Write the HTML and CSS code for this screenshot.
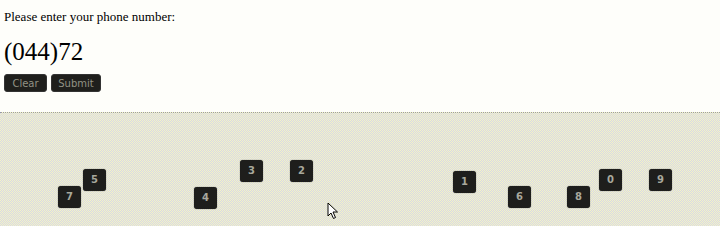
FILE: index.html
```html
<!DOCTYPE html>
<html lang="en">
<head>
    <meta charset="UTF-8">
    <title>Phone Number</title>
    <link rel="stylesheet" href="styles.css">
</head>
<body>
    <div class="entry">
        <p class="prompt">Please enter your phone number:</p>
        <div class="number">(044)72</div>
        <div class="actions">
            <button class="btn btn-clear">Clear</button>
            <button class="btn btn-submit">Submit</button>
        </div>
    </div>

    <div class="keypad">
        <span class="key" style="left:58px;top:73px">7</span>
        <span class="key" style="left:83px;top:56px">5</span>
        <span class="key" style="left:194px;top:74px">4</span>
        <span class="key" style="left:240px;top:47px">3</span>
        <span class="key" style="left:290px;top:47px">2</span>
        <span class="key" style="left:453px;top:58px">1</span>
        <span class="key" style="left:508px;top:73px">6</span>
        <span class="key" style="left:567px;top:73px">8</span>
        <span class="key" style="left:599px;top:56px">0</span>
        <span class="key" style="left:649px;top:56px">9</span>

        <!-- mouse pointer -->
        <svg class="pointer" width="12" height="18" viewBox="0 0 12 18">
            <path d="M1 1 L1 14 L4 11 L6.5 16.5 L8.5 15.5 L6 10 L10.5 10 Z" fill="#fff" stroke="#000" stroke-width="1"/>
        </svg>
    </div>
</body>
</html>
```

FILE: styles.css
```css
body {
    margin: 0;
    font-family: "Liberation Serif", serif;
    background-color: #fefefa;
    color: #000;
}
.entry {
    padding: 0 4px;
    height: 112px;
    box-sizing: border-box;
    overflow: hidden;
}
.prompt {
    margin: 0;
    padding-top: 9px;
    font-size: 13px;
    line-height: 16px;
}
.number {
    font-size: 25px;
    line-height: 30px;
    margin-top: 12px;
}
.actions {
    display: flex;
    gap: 4px;
    margin-top: 7px;
}
.btn {
    font-family: "DejaVu Sans", Verdana, sans-serif;
    font-size: 10px;
    color: #929284;
    background-color: #1f1f1c;
    border: 1px solid #333;
    border-radius: 3px;
    height: 18px;
    padding: 0;
    cursor: pointer;
}
.btn-clear {
    width: 43px;
}
.btn-submit {
    width: 50px;
}
.keypad {
    position: relative;
    height: 114px;
    border-top: 1px dotted #9a9aa4;
    background-color: #e8e8da;
    background-image: repeating-conic-gradient(#f4f4c6 0 25%, #d8d8e6 0 50%);
    background-size: 2px 2px;
}
.key {
    position: absolute;
    width: 23px;
    height: 22px;
    background-color: #1e1e1c;
    border-radius: 3px;
    box-shadow: 0 0 1px #444;
    color: #a8a89c;
    font-family: "DejaVu Sans", sans-serif;
    font-weight: bold;
    font-size: 10px;
    line-height: 22px;
    text-align: center;
}
.pointer {
    position: absolute;
    left: 327px;
    top: 89px;
}
```
